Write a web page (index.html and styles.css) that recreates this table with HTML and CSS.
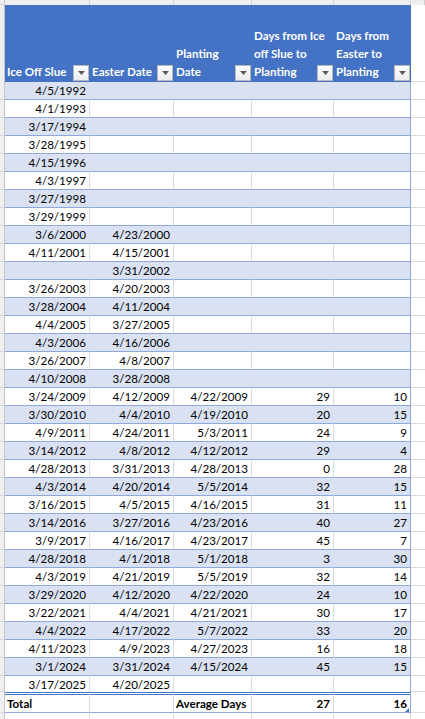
FILE: index.html
```html
<!DOCTYPE html>
<html>
<head>
<meta charset="utf-8">
<link rel="stylesheet" href="styles.css">
</head>
<body>
<div class="sheet">
  <div class="row colhdr"><i class="gl"></i><i class="ch"></i><i class="ch"></i><i class="ch"></i><i class="ch"></i><i class="ch"></i><i class="ch last"></i></div>

  <div class="row head">
    <i class="gl"></i>
    <div class="h"><span class="ht">Ice Off Slue</span><span class="fb"><svg width="7" height="4" viewBox="0 0 7 4"><polygon points="0,0 7,0 3.5,4" fill="#595959"/></svg></span></div>
    <div class="h"><span class="ht">Easter Date</span><span class="fb"><svg width="7" height="4" viewBox="0 0 7 4"><polygon points="0,0 7,0 3.5,4" fill="#595959"/></svg></span></div>
    <div class="h"><span class="ht">Planting<br>Date</span><span class="fb"><svg width="7" height="4" viewBox="0 0 7 4"><polygon points="0,0 7,0 3.5,4" fill="#595959"/></svg></span></div>
    <div class="h"><span class="ht">Days from Ice<br>off Slue to<br>Planting</span><span class="fb"><svg width="7" height="4" viewBox="0 0 7 4"><polygon points="0,0 7,0 3.5,4" fill="#595959"/></svg></span></div>
    <div class="h"><span class="ht">Days from<br>Easter to<br>Planting</span><span class="fb"><svg width="7" height="4" viewBox="0 0 7 4"><polygon points="0,0 7,0 3.5,4" fill="#595959"/></svg></span></div>
    <i class="gr"></i>
  </div>

  <div class="row band"><i class="gl"></i><div class="d">4/5/1992</div><div class="d"></div><div class="d"></div><div class="d"></div><div class="d e"></div><i class="gr"></i></div>
  <div class="row"><i class="gl"></i><div class="d">4/1/1993</div><div class="d"></div><div class="d"></div><div class="d"></div><div class="d e"></div><i class="gr"></i></div>
  <div class="row band"><i class="gl"></i><div class="d">3/17/1994</div><div class="d"></div><div class="d"></div><div class="d"></div><div class="d e"></div><i class="gr"></i></div>
  <div class="row"><i class="gl"></i><div class="d">3/28/1995</div><div class="d"></div><div class="d"></div><div class="d"></div><div class="d e"></div><i class="gr"></i></div>
  <div class="row band"><i class="gl"></i><div class="d">4/15/1996</div><div class="d"></div><div class="d"></div><div class="d"></div><div class="d e"></div><i class="gr"></i></div>
  <div class="row"><i class="gl"></i><div class="d">4/3/1997</div><div class="d"></div><div class="d"></div><div class="d"></div><div class="d e"></div><i class="gr"></i></div>
  <div class="row band"><i class="gl"></i><div class="d">3/27/1998</div><div class="d"></div><div class="d"></div><div class="d"></div><div class="d e"></div><i class="gr"></i></div>
  <div class="row"><i class="gl"></i><div class="d">3/29/1999</div><div class="d"></div><div class="d"></div><div class="d"></div><div class="d e"></div><i class="gr"></i></div>
  <div class="row band"><i class="gl"></i><div class="d">3/6/2000</div><div class="d">4/23/2000</div><div class="d"></div><div class="d"></div><div class="d e"></div><i class="gr"></i></div>
  <div class="row"><i class="gl"></i><div class="d">4/11/2001</div><div class="d">4/15/2001</div><div class="d"></div><div class="d"></div><div class="d e"></div><i class="gr"></i></div>
  <div class="row band"><i class="gl"></i><div class="d"></div><div class="d">3/31/2002</div><div class="d"></div><div class="d"></div><div class="d e"></div><i class="gr"></i></div>
  <div class="row"><i class="gl"></i><div class="d">3/26/2003</div><div class="d">4/20/2003</div><div class="d"></div><div class="d"></div><div class="d e"></div><i class="gr"></i></div>
  <div class="row band"><i class="gl"></i><div class="d">3/28/2004</div><div class="d">4/11/2004</div><div class="d"></div><div class="d"></div><div class="d e"></div><i class="gr"></i></div>
  <div class="row"><i class="gl"></i><div class="d">4/4/2005</div><div class="d">3/27/2005</div><div class="d"></div><div class="d"></div><div class="d e"></div><i class="gr"></i></div>
  <div class="row band"><i class="gl"></i><div class="d">4/3/2006</div><div class="d">4/16/2006</div><div class="d"></div><div class="d"></div><div class="d e"></div><i class="gr"></i></div>
  <div class="row"><i class="gl"></i><div class="d">3/26/2007</div><div class="d">4/8/2007</div><div class="d"></div><div class="d"></div><div class="d e"></div><i class="gr"></i></div>
  <div class="row band"><i class="gl"></i><div class="d">4/10/2008</div><div class="d">3/28/2008</div><div class="d"></div><div class="d"></div><div class="d e"></div><i class="gr"></i></div>
  <div class="row"><i class="gl"></i><div class="d">3/24/2009</div><div class="d">4/12/2009</div><div class="d">4/22/2009</div><div class="d">29</div><div class="d e">10</div><i class="gr"></i></div>
  <div class="row band"><i class="gl"></i><div class="d">3/30/2010</div><div class="d">4/4/2010</div><div class="d">4/19/2010</div><div class="d">20</div><div class="d e">15</div><i class="gr"></i></div>
  <div class="row"><i class="gl"></i><div class="d">4/9/2011</div><div class="d">4/24/2011</div><div class="d">5/3/2011</div><div class="d">24</div><div class="d e">9</div><i class="gr"></i></div>
  <div class="row band"><i class="gl"></i><div class="d">3/14/2012</div><div class="d">4/8/2012</div><div class="d">4/12/2012</div><div class="d">29</div><div class="d e">4</div><i class="gr"></i></div>
  <div class="row"><i class="gl"></i><div class="d">4/28/2013</div><div class="d">3/31/2013</div><div class="d">4/28/2013</div><div class="d">0</div><div class="d e">28</div><i class="gr"></i></div>
  <div class="row band"><i class="gl"></i><div class="d">4/3/2014</div><div class="d">4/20/2014</div><div class="d">5/5/2014</div><div class="d">32</div><div class="d e">15</div><i class="gr"></i></div>
  <div class="row"><i class="gl"></i><div class="d">3/16/2015</div><div class="d">4/5/2015</div><div class="d">4/16/2015</div><div class="d">31</div><div class="d e">11</div><i class="gr"></i></div>
  <div class="row band"><i class="gl"></i><div class="d">3/14/2016</div><div class="d">3/27/2016</div><div class="d">4/23/2016</div><div class="d">40</div><div class="d e">27</div><i class="gr"></i></div>
  <div class="row"><i class="gl"></i><div class="d">3/9/2017</div><div class="d">4/16/2017</div><div class="d">4/23/2017</div><div class="d">45</div><div class="d e">7</div><i class="gr"></i></div>
  <div class="row band"><i class="gl"></i><div class="d">4/28/2018</div><div class="d">4/1/2018</div><div class="d">5/1/2018</div><div class="d">3</div><div class="d e">30</div><i class="gr"></i></div>
  <div class="row"><i class="gl"></i><div class="d">4/3/2019</div><div class="d">4/21/2019</div><div class="d">5/5/2019</div><div class="d">32</div><div class="d e">14</div><i class="gr"></i></div>
  <div class="row band"><i class="gl"></i><div class="d">3/29/2020</div><div class="d">4/12/2020</div><div class="d">4/22/2020</div><div class="d">24</div><div class="d e">10</div><i class="gr"></i></div>
  <div class="row"><i class="gl"></i><div class="d">3/22/2021</div><div class="d">4/4/2021</div><div class="d">4/21/2021</div><div class="d">30</div><div class="d e">17</div><i class="gr"></i></div>
  <div class="row band"><i class="gl"></i><div class="d">4/4/2022</div><div class="d">4/17/2022</div><div class="d">5/7/2022</div><div class="d">33</div><div class="d e">20</div><i class="gr"></i></div>
  <div class="row"><i class="gl"></i><div class="d">4/11/2023</div><div class="d">4/9/2023</div><div class="d">4/27/2023</div><div class="d">16</div><div class="d e">18</div><i class="gr"></i></div>
  <div class="row band"><i class="gl"></i><div class="d">3/1/2024</div><div class="d">3/31/2024</div><div class="d">4/15/2024</div><div class="d">45</div><div class="d e">15</div><i class="gr"></i></div>
  <div class="row lastdata"><i class="gl"></i><div class="d">3/17/2025</div><div class="d">4/20/2025</div><div class="d"></div><div class="d"></div><div class="d e"></div><i class="gr"></i></div>

  <div class="row total"><i class="gl"></i><div class="d l">Total</div><div class="d"></div><div class="d l">Average Days</div><div class="d">27</div><div class="d e handle">16</div><i class="gr"></i></div>

  <div class="row blank"><i class="gl"></i><i class="bc"></i><i class="bc"></i><i class="bc"></i><i class="bc"></i><i class="bc"></i><i class="gr"></i></div>
</div>
</body>
</html>
```

FILE: styles.css
```css
* { box-sizing: border-box; }

body {
  margin: 0;
  background: #ffffff;
  font-family: Lato, "Open Sans", sans-serif;
  font-size: 11.6px;
  color: #000000;
}

.sheet {
  width: 425px;
  height: 719px;
  overflow: hidden;
}

.row {
  display: grid;
  grid-template-columns: 5px 85px 84px 78px 82px 77px 14px;
}

.row i { display: block; font-style: normal; }

/* column header strip (cut off) */
.colhdr { height: 5px; background: #efefef; }
.colhdr .ch { border-right: 1px solid #d0d0d0; }
.colhdr .gl { border-right: 1px solid #c4c4c4; }

/* gutters */
.gl {
  background: #efefef;
  border-right: 1px solid #c4c4c4;
  border-bottom: 1px solid #d8d8d8;
}
.gr { border-bottom: 1px solid #dcdcdc; }

/* header */
.head { height: 77px; }
.head .gl { border-bottom: none; }
.head .gr { border-bottom: 1px solid #dcdcdc; }
.h {
  background: #4472C4;
  color: #ffffff;
  font-weight: 700;
  line-height: 18px;
  display: flex;
  align-items: flex-end;
  padding: 0 1px 0 2px;
  white-space: nowrap;
  border-bottom: 1px solid #4472C4;
}
.ht {
  display: block;
  flex: 1 1 auto;
  min-width: 0;
}
.fb {
  flex: none;
  width: 16px;
  height: 16px;
  border: 1px solid #b8b8b8;
  background: linear-gradient(#ffffff, #ececec);
  display: flex;
  align-items: center;
  justify-content: center;
  position: relative;
}
.fb svg { display: block; }

/* data cells */
.d {
  height: 18px;
  line-height: 18px;
  padding: 0 3px 0 2px;
  text-align: right;
  white-space: nowrap;
  border-right: 1px solid #dadada;
  border-bottom: 1px solid #8EA9DB;
}
.band .d {
  background: #D9E1F2;
  border-right-color: #D9E1F2;
}
.row .e { border-right-color: #8EA9DB; }

.lastdata .d { height: 16px; border-bottom: none; line-height: 17px; }

.total .d {
  height: 21px;
  line-height: 17px;
  font-weight: 700;
  border-top: 3px double #4472C4;
}
.total .l { text-align: left; }
.handle { position: relative; }
.handle::after {
  content: "";
  position: absolute;
  right: 1px;
  bottom: 0;
  width: 0;
  height: 0;
  border-left: 4px solid transparent;
  border-bottom: 4px solid #4472C4;
}

.blank { height: 7px; }
.blank .bc { border-right: 1px solid #dadada; }
.blank .gl { border-bottom: none; }
.blank .gr { border-bottom: none; }
```
